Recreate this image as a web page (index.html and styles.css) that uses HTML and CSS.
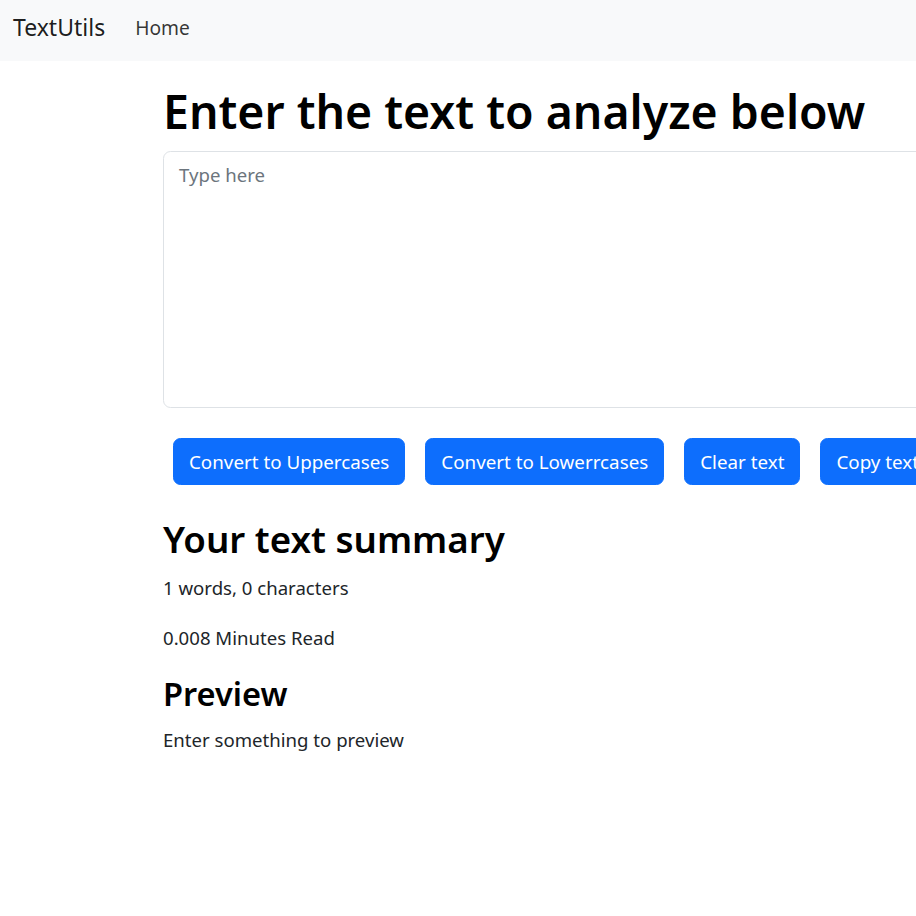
FILE: index.html
```html
<!DOCTYPE html>
<html lang="en">
<head>
<meta charset="utf-8">
<title>TextUtils</title>
<link rel="stylesheet" href="styles.css">
</head>
<body>
<nav class="navbar">
  <a class="brand" href="#">TextUtils</a>
  <a class="nav-link" href="#">Home</a>
</nav>
<div class="container first">
  <h1 class="title">Enter the text to analyze below</h1>
  <div class="form-group">
    <textarea class="textbox" rows="8" placeholder="Type here"></textarea>
  </div>
  <div class="actions">
    <button class="btn">Convert to Uppercases</button>
    <button class="btn">Convert to Lowerrcases</button>
    <button class="btn">Clear text</button>
    <button class="btn">Copy text</button>
  </div>
</div>
<div class="container second">
  <h2 class="h2">Your text summary</h2>
  <p class="para">1 words, 0 characters</p>
  <p class="para">0.008 Minutes Read</p>
  <h3 class="h3">Preview</h3>
  <p class="para">Enter something to preview</p>
</div>
</body>
</html>
```
FILE: styles.css
```css
html, body {
  overflow: hidden;
}
body {
  margin: 0;
  font-family: "Segoe UI", "Noto Sans", sans-serif;
  font-size: 18.6px;
  line-height: 30px;
  color: #212529;
  background: #fff;
}
.navbar {
  height: 61px;
  background: #f8f9fa;
  display: flex;
  align-items: center;
  padding-left: 13px;
  padding-bottom: 6px;
  box-sizing: border-box;
}
.brand {
  font-size: 23px;
  color: rgba(0, 0, 0, 0.9);
  text-decoration: none;
  margin-right: 20px;
  line-height: 37px;
}
.nav-link {
  font-size: 19.2px;
  color: rgba(0, 0, 0, 0.8);
  text-decoration: none;
  padding: 0 10px;
}
.container {
  margin: 20px 0 20px 163px;
  width: 1114px;
}
.title {
  font-size: 46.4px;
  font-weight: 600;
  line-height: 60px;
  margin: 0 0 10px;
  color: #000;
}
.form-group {
  margin-bottom: 20px;
}
.textbox {
  display: block;
  width: 100%;
  box-sizing: border-box;
  height: 257px;
  padding: 7.5px 15px;
  font: inherit;
  color: #212529;
  border: 1px solid #dee2e6;
  border-radius: 7.5px;
  resize: none;
}
.textbox::placeholder {
  color: #6c757d;
}
.actions {
  display: flex;
  gap: 20px;
  padding: 10px 0 10px 10px;
}
.btn {
  height: 47px;
  padding: 0 15px;
  font: inherit;
  font-size: 18.8px;
  color: #fff;
  background: #0d6efd;
  border: 1px solid #0d6efd;
  border-radius: 7.5px;
  white-space: nowrap;
  flex: none;
}
.h2 {
  font-size: 36.7px;
  font-weight: 600;
  line-height: 48px;
  margin: 0 0 10px;
  color: #000;
}
.h3 {
  font-size: 32.6px;
  font-weight: 600;
  line-height: 42px;
  margin: 0 0 10px;
  color: #000;
}
.para {
  margin: 0 0 20px;
}
```
